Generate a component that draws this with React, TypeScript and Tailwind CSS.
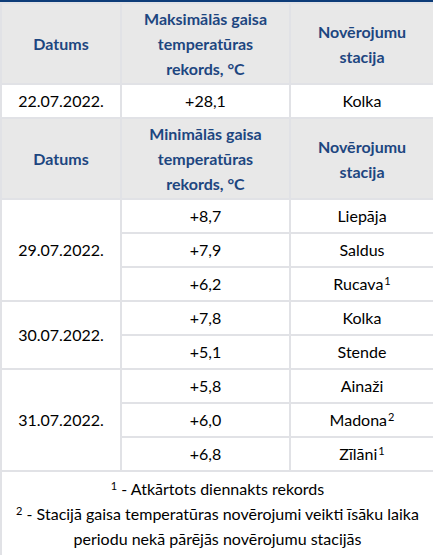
import React from 'react';

type Row = { date?: string; span?: number; temp: string; station: string; sup?: string };

const minRows: Row[] = [
  { date: '29.07.2022.', span: 3, temp: '+8,7', station: 'Liepāja' },
  { temp: '+7,9', station: 'Saldus' },
  { temp: '+6,2', station: 'Rucava', sup: '1' },
  { date: '30.07.2022.', span: 2, temp: '+7,8', station: 'Kolka' },
  { temp: '+5,1', station: 'Stende' },
  { date: '31.07.2022.', span: 3, temp: '+5,8', station: 'Ainaži' },
  { temp: '+6,0', station: 'Madona', sup: '2' },
  { temp: '+6,8', station: 'Zīlāni', sup: '1' },
];

const th = 'border-2 border-[#e1e2e6] bg-[#e8e8e8] text-[#1d4680] font-bold text-[16px] leading-[25px] px-1 py-0 text-center align-middle';
const td = 'border-2 border-[#e1e2e6] text-center align-middle text-[16px] text-black h-[34px] px-2 py-0';

function Header({ kind }: { kind: string }) {
  return (
    <tr className="h-[81px]">
      <th className={th}>Datums</th>
      <th className={th}>{kind} gaisa<br />temperatūras<br />rekords, °C</th>
      <th className={th}>Novērojumu<br />stacija</th>
    </tr>
  );
}

export default function App() {
  return (
    <div className="w-[433px] bg-white" style={{ fontFamily: '"Lato", "Noto Sans", sans-serif' }}>
      <div className="h-[2px] bg-[#0d3c78]" />
      <table className="w-[433px] border-collapse table-fixed">
        <colgroup>
          <col className="w-[120px]" />
          <col className="w-[169px]" />
          <col className="w-[144px]" />
        </colgroup>
        <tbody>
          <Header kind="Maksimālās" />
          <tr>
            <td className={td}>22.07.2022.</td>
            <td className={td}>+28,1</td>
            <td className={td}>Kolka</td>
          </tr>
          <Header kind="Minimālās" />
          {minRows.map((r, i) => (
            <tr key={i}>
              {r.date && <td rowSpan={r.span} className={td}>{r.date}</td>}
              <td className={td}>{r.temp}</td>
              <td className={td}>
                {r.station}
                {r.sup && <sup className="text-[11px] ml-[1px]">{r.sup}</sup>}
              </td>
            </tr>
          ))}
          <tr>
            <td colSpan={3} className="border-2 border-[#e1e2e6] text-center text-[16px] leading-[25px] px-2 py-[4px]">
              <sup className="text-[11px]">1</sup> - Atkārtots diennakts rekords<br />
              <sup className="text-[11px]">2</sup> - Stacijā gaisa temperatūras novērojumi veikti īsāku laika<br />
              periodu nekā pārējās novērojumu stacijās
            </td>
          </tr>
        </tbody>
      </table>
    </div>
  );
}
